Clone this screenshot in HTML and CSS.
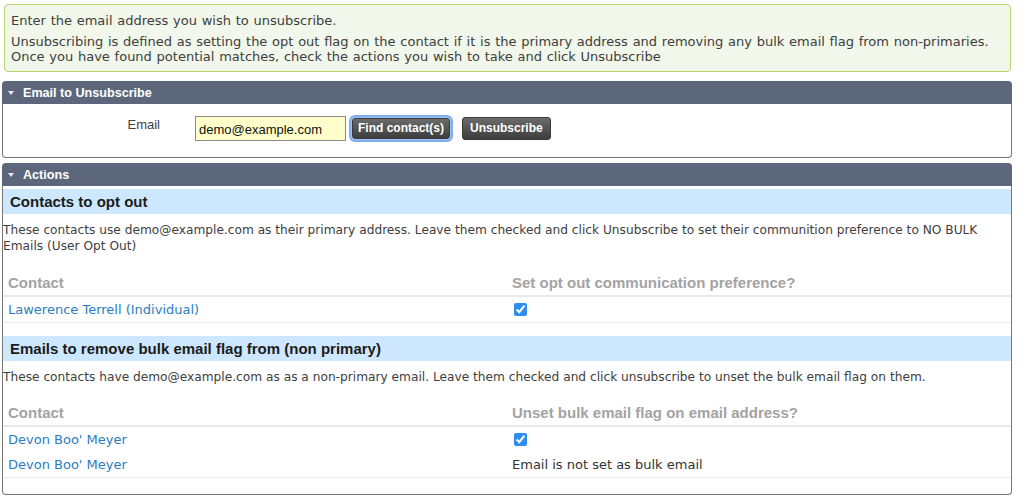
FILE: index.html
```html
<!DOCTYPE html>
<html lang="en">
<head>
<meta charset="utf-8">
<title>Unsubscribe Email</title>
<link rel="stylesheet" href="styles.css">
</head>
<body>
<div class="page">
  <div class="help">
    <p>Enter the email address you wish to unsubscribe.</p>
    <p>Unsubscribing is defined as setting the opt out flag on the contact if it is the primary address and removing any bulk email flag from non-primaries.<br>Once you have found potential matches, check the actions you wish to take and click Unsubscribe</p>
  </div>

  <div class="panel">
    <div class="panel-head"><span class="caret"></span>Email to Unsubscribe</div>
    <div class="panel-body form-body">
      <div class="form-row">
        <label class="form-label" for="email">Email</label>
        <input class="email-input" id="email" type="text" value="demo@example.com">
        <button class="btn btn-focus" type="button">Find contact(s)</button>
        <button class="btn" type="button">Unsubscribe</button>
      </div>
    </div>
  </div>

  <div class="panel">
    <div class="panel-head"><span class="caret"></span>Actions</div>
    <div class="panel-body actions-body">
      <h3 class="band">Contacts to opt out</h3>
      <p class="desc">These contacts use demo@example.com as their primary address. Leave them checked and click Unsubscribe to set their communition preference to NO BULK Emails (User Opt Out)</p>
      <table class="grid">
        <thead>
          <tr><th>Contact</th><th>Set opt out communication preference?</th></tr>
        </thead>
        <tbody>
          <tr><td><a href="#">Lawerence Terrell (Individual)</a></td><td><input class="chk" type="checkbox" checked></td></tr>
        </tbody>
      </table>

      <h3 class="band">Emails to remove bulk email flag from (non primary)</h3>
      <p class="desc desc-short">These contacts have demo@example.com as as a non-primary email. Leave them checked and click unsubscribe to unset the bulk email flag on them.</p>
      <table class="grid">
        <thead>
          <tr><th>Contact</th><th>Unset bulk email flag on email address?</th></tr>
        </thead>
        <tbody>
          <tr><td><a href="#">Devon Boo' Meyer</a></td><td><input class="chk" type="checkbox" checked></td></tr>
          <tr><td><a href="#">Devon Boo' Meyer</a></td><td class="plain">Email is not set as bulk email</td></tr>
        </tbody>
      </table>
    </div>
  </div>
</div>
</body>
</html>
```

FILE: styles.css
```css
html, body {
  margin: 0;
  padding: 0;
  background: #ffffff;
}

body {
  font-family: "DejaVu Sans", Verdana, sans-serif;
  font-size: 13px;
  color: #3e3e3e;
}

.page {
  width: 1010px;
  margin-left: 2px;
  padding-top: 4px;
}

.help {
  margin: 0 1px 9px 2px;
  padding: 8px 6px 7px 6px;
  background: #f1f7ea;
  border: 1px solid #b7d76c;
  border-radius: 4px;
  word-spacing: 0.6px;
}

.help p {
  margin: 0;
  line-height: 15px;
}

.help p + p {
  margin-top: 6px;
}

.panel {
  margin-bottom: 5px;
}

.panel-head {
  display: flex;
  align-items: center;
  height: 23px;
  padding-left: 6px;
  background: #5d677b;
  color: #ffffff;
  font-family: "Liberation Sans", Arial, sans-serif;
  font-weight: bold;
  font-size: 12.6px;
  border-radius: 4px 4px 0 0;
}

.caret {
  width: 0;
  height: 0;
  border-left: 3.5px solid transparent;
  border-right: 3.5px solid transparent;
  border-top: 4px solid #e8eaee;
  margin-right: 9px;
  margin-top: 1px;
}

.panel-body {
  border: 1px solid #767676;
  border-top: none;
  border-radius: 0 0 4px 4px;
}

.form-body {
  height: 53px;
}

.form-row {
  display: flex;
  align-items: flex-start;
  padding-top: 12px;
}

.form-label {
  width: 157px;
  text-align: right;
  font-family: "Liberation Sans", Arial, sans-serif;
  font-size: 13px;
  color: #3e3e3e;
  padding-top: 1px;
  margin-right: 35px;
}

.email-input {
  box-sizing: border-box;
  width: 151px;
  height: 25px;
  margin: 0;
  padding: 2px 3px 0;
  background: #ffffcc;
  border: 1px solid #8a8a8a;
  font-family: "Liberation Sans", Arial, sans-serif;
  font-size: 13px;
  color: #111;
  outline: none;
}

.btn {
  box-sizing: border-box;
  height: 23px;
  margin: 1px 0 0 0;
  padding: 0 7px;
  background: linear-gradient(#6b6b6b, #3d3d3d);
  border: 1px solid #3a3a3a;
  border-radius: 3px;
  color: #ffffff;
  font-family: "Liberation Sans", Arial, sans-serif;
  font-weight: bold;
  font-size: 12px;
  line-height: 21px;
  white-space: nowrap;
}

.btn-focus {
  margin-left: 6px;
  margin-right: 12px;
  padding: 0 5px;
  height: 21px;
  margin-top: 2px;
  line-height: 19px;
  box-shadow: 0 0 0 1px #9ec3f5, 0 0 0 3px #7eaef0;
}

.actions-body {
  padding: 3px 0 16px 0;
}

.band {
  margin: 0;
  height: 25px;
  line-height: 26px;
  padding-left: 7px;
  background: #cde8fe;
  color: #1b1b1b;
  font-family: "Liberation Sans", Arial, sans-serif;
  font-weight: bold;
  font-size: 15px;
}

.desc {
  margin: 8px 0 15px 0;
  line-height: 16px;
  font-size: 12.2px;
  color: #3e3e3e;
}

.desc-short {
  margin-bottom: 14px;
}

.grid {
  width: 100%;
  border-collapse: collapse;
  table-layout: fixed;
  margin-bottom: 13px;
}

.grid:last-child {
  margin-bottom: 0;
}

.grid th {
  text-align: left;
  height: 26px;
  padding: 0 5px;
  color: #a3a3a3;
  font-family: "Liberation Sans", Arial, sans-serif;
  font-weight: bold;
  font-size: 15px;
  border-bottom: 2px solid #e9e9e9;
  vertical-align: middle;
}

.grid td {
  height: 25px;
  padding: 0 5px;
  border-bottom: 1px solid #ececec;
  vertical-align: middle;
  color: #333333;
}

.grid tbody tr:not(:last-child) td {
  border-bottom: none;
}

.grid a {
  color: #2a7ec0;
  text-decoration: none;
}

.chk {
  margin: 0 0 2px 2px;
  width: 13px;
  height: 13px;
  accent-color: #2f8cf3;
  vertical-align: middle;
}

.plain {
  color: #333333;
}
```
